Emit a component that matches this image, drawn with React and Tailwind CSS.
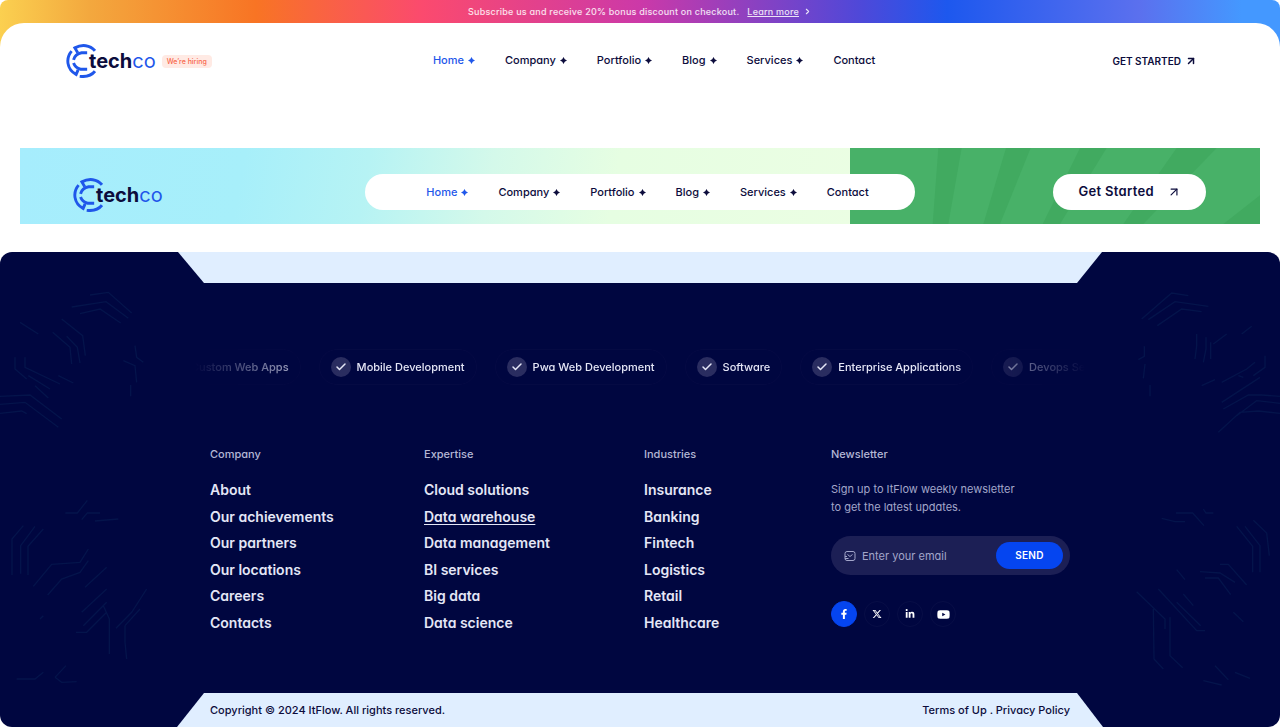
import React from 'react';
import { FaFacebookF, FaLinkedinIn, FaYoutube } from 'react-icons/fa';
import { FaXTwitter } from 'react-icons/fa6';
import { LuArrowUpRight, LuCheck, LuChevronRight } from 'react-icons/lu';

const navItems = [
  { text: 'Home', plus: true, active: true },
  { text: 'Company', plus: true },
  { text: 'Portfolio', plus: true },
  { text: 'Blog', plus: true },
  { text: 'Services', plus: true },
  { text: 'Contact' },
];

const services = [
  'Custom Web Apps',
  'Mobile Development',
  'Pwa Web Development',
  'Software',
  'Enterprise Applications',
  'Devops Services',
];

const columns = [
  {
    title: 'Company',
    links: ['About', 'Our achievements', 'Our partners', 'Our locations', 'Careers', 'Contacts'],
  },
  {
    title: 'Expertise',
    links: ['Cloud solutions', 'Data warehouse', 'Data management', 'BI services', 'Big data', 'Data science'],
    current: 'Data warehouse',
  },
  {
    title: 'Industries',
    links: ['Insurance', 'Banking', 'Fintech', 'Logistics', 'Retail', 'Healthcare'],
  },
];

const socials = [
  { name: 'Facebook', icon: <FaFacebookF />, active: true },
  { name: 'X', icon: <FaXTwitter /> },
  { name: 'LinkedIn', icon: <FaLinkedinIn /> },
  { name: 'YouTube', icon: <FaYoutube className="text-[13px]" /> },
];

export default function App() {
  return (
    <div className="bg-white font-['Inter',sans-serif] text-[#0c0c3c] [font-feature-settings:'cv11']">
      <TopHeader />
      <Banner />
      <Footer />
    </div>
  );
}

function TopHeader() {
  return (
    <header className="rounded-t-lg bg-[linear-gradient(90deg,#fbd050_0%,#f3a83e_7%,#f87424_20%,#fb4a6e_33%,#cc39a8_50%,#5048d8_67%,#1d58ee_74%,#5b70ee_89%,#4498ff_97%)]">
      <div className="flex h-[23px] items-center justify-center gap-2 text-[9px] font-medium tracking-wide text-white/85">
        <p>Subscribe us and receive 20% bonus discount on checkout.</p>
        <a href="#" className="flex items-center gap-1">
          <span className="underline">Learn more</span>
          <LuChevronRight strokeWidth={3} />
        </a>
      </div>
      <div className="flex h-[125px] items-start justify-between rounded-t-3xl bg-white pt-4 pr-[67px] pl-[66px]">
        <div className="flex h-11 items-center gap-[6px]">
          <Logo />
          <span className="rounded-sm bg-[#ffeae4] px-[5px] text-[7px] leading-[13px] font-medium text-[#f8694c]">
            We’re hiring
          </span>
        </div>
        <nav className="flex h-[42px] items-center">
          <NavLinks />
        </nav>
        <button className="flex h-11 items-center gap-1 rounded-full px-4 text-[10px] font-semibold">
          GET STARTED <LuArrowUpRight className="text-xs" strokeWidth={3} />
        </button>
      </div>
    </header>
  );
}

function Banner() {
  return (
    <section className="relative mx-5 bg-[linear-gradient(100deg,#a6edfd_0%,#a7effa_18%,#b6f3f4_28%,#d4f9ea_38%,#e6fee2_48%,#ebfee3_68%)]">
      {/* green part with the rays */}
      <svg
        className="absolute top-0 right-0 h-full w-[410px]"
        viewBox="-30 22 1230 230"
        preserveAspectRatio="none"
        aria-hidden="true"
      >
        <rect x="-30" y="22" width="1230" height="230" fill="#48b168" />
        <g fill="#41aa60">
          <path d="M235 22H305L265 252H218Z" />
          <path d="M438 22H512L420 252H370Z" />
          <path d="M660 22H740L600 252H548Z" />
          <path d="M950 22H1070L850 252H790Z" />
          <path d="M1200 165V252H1090Z" />
        </g>
      </svg>
      <div className="relative flex h-[76px] items-center pt-3 pr-[54px] pl-[53px]">
        <div className="flex-1 pt-[6px]">
          <Logo />
        </div>
        <nav className="flex h-9 w-[550px] items-center justify-center rounded-full bg-white pl-4">
          <NavLinks />
        </nav>
        <div className="flex flex-1 justify-end">
          <button className="flex h-9 items-center gap-[13px] rounded-full bg-white px-[25px] text-[13px] font-semibold tracking-wide">
            Get Started <LuArrowUpRight className="text-sm" />
          </button>
        </div>
      </div>
    </section>
  );
}

function NavLinks() {
  return (
    <ul className="flex items-center gap-[30px]">
      {navItems.map((item) => (
        <li key={item.text}>
          <a
            href="#"
            className={`flex items-center gap-1 text-[11px] font-medium ${item.active ? 'text-[#1f57ea]' : ''}`}
          >
            {item.text}
            {item.plus && <Spark />}
          </a>
        </li>
      ))}
    </ul>
  );
}

// four-pointed star next to the menu items
function Spark() {
  return (
    <svg className="size-[7px]" viewBox="0 0 14 14" fill="currentColor" aria-hidden="true">
      <path d="M7 0L9.5 4.5L14 7L9.5 9.5L7 14L4.5 9.5L0 7L4.5 4.5Z" />
    </svg>
  );
}

function Logo() {
  return (
    <a href="#" className="flex items-center text-xl leading-6">
      <svg className="h-[34px] w-[30px] shrink-0" viewBox="0 0 90 105" fill="none" aria-hidden="true">
        <g stroke="#1f57ea" strokeWidth="9">
          <path d="M88 21C73 3 48 0 26 12L35 27" />
          <path d="M16 22C-3 44 1 79 30 94L36 80" />
          <path d="M41 100C59 102 77 98 88 84" />
          <path d="M64 27H47C34 29 25 37 22 49" />
          <path d="M22 59C26 70 33 76 44 78H64" />
        </g>
      </svg>
      <span className="-ml-[7px] font-bold">tech</span>
      <span className="text-[#1f57ea]">co</span>
    </a>
  );
}

function Footer() {
  return (
    <footer className="relative mt-7 overflow-hidden rounded-xl bg-[#000640] text-[#e4e6f6]">
      <CircuitLeft />
      <CircuitRight />
      <div className="relative">
        <div className="mx-[178px] h-[31px] bg-[#e0eeff] [clip-path:polygon(0_0,100%_0,calc(100%-25px)_100%,26px_100%)]" />

        {/* services strip, faded at both ends */}
        <div className="mx-[195px] mt-[66px] overflow-hidden [mask-image:linear-gradient(90deg,transparent,#000_16%,#000_84%,transparent)]">
          <ul className="-ml-[42px] flex w-max gap-[18px]">
            {services.map((service) => (
              <li
                key={service}
                className="flex h-9 items-center gap-[6px] rounded-full border border-white/2 px-[11px] text-[11px] font-medium"
              >
                <span className="flex size-5 items-center justify-center rounded-full bg-[#2a2d60]">
                  <LuCheck className="text-xs" strokeWidth={3} />
                </span>
                {service}
              </li>
            ))}
          </ul>
        </div>

        <div className="mx-[210px] mt-[61px] grid grid-cols-[214fr_220fr_187fr_239fr]">
          {columns.map((column) => (
            <div key={column.title} className="min-w-0">
              <h2 className="text-[11px] leading-4 font-medium text-[#b4b7d5]">{column.title}</h2>
              <ul className="mt-[18px] flex h-[153px] flex-col justify-between text-sm leading-5 font-semibold">
                {column.links.map((link) => (
                  <li key={link}>
                    <a href="#" className={link === column.current ? 'underline underline-offset-2' : ''}>
                      {link}
                    </a>
                  </li>
                ))}
              </ul>
            </div>
          ))}
          <Newsletter />
        </div>

        <div className="mx-[177px] mt-[60px] flex h-[34px] items-center justify-between bg-[#e0eeff] px-[33px] text-[11px] font-medium text-[#0c0c3c] [clip-path:polygon(27px_0,calc(100%-26px)_0,100%_100%,0_100%)]">
          <p>Copyright © 2024 ItFlow. All rights reserved.</p>
          <p>
            <a href="#">Terms of Up</a> . <a href="#">Privacy Policy</a>
          </p>
        </div>
      </div>
    </footer>
  );
}

function Newsletter() {
  return (
    <div className="min-w-0">
      <h2 className="text-[11px] leading-4 font-medium text-[#b4b7d5]">Newsletter</h2>
      <p className="mt-[18px] text-[11px] leading-[18px] text-[#a3a6ca]">
        Sign up to ItFlow weekly newsletter
        <br />
        to get the latest updates.
      </p>
      <form className="mt-5 flex h-[39px] items-center rounded-full bg-[#1c1f55] pr-[7px] pl-[13px]">
        <label htmlFor="email" className="text-[#a3a6ca]" aria-label="Email">
          <svg className="size-3" viewBox="0 0 24 24" fill="none" stroke="currentColor" strokeWidth="2" aria-hidden="true">
            <rect x="2" y="3" width="20" height="18" rx="4" />
            <path d="M7 9L12 13L17 9M2 13H6M2 17H9" />
          </svg>
        </label>
        <input
          id="email"
          type="email"
          placeholder="Enter your email"
          className="ml-[6px] h-full min-w-0 flex-1 bg-transparent text-[11px] outline-none placeholder:text-[#a3a6ca]"
        />
        <button className="h-[27px] w-[67px] rounded-full bg-[#0545f0] text-[10px] font-semibold tracking-wide text-white">
          SEND
        </button>
      </form>
      <div className="mt-[26px] flex gap-[7px]">
        {socials.map((social) => (
          <a
            key={social.name}
            href="#"
            aria-label={social.name}
            className={`flex size-[26px] items-center justify-center rounded-full border text-[10px] text-white ${
              social.active ? 'border-[#0545f0] bg-[#0545f0]' : 'border-white/3'
            }`}
          >
            {social.icon}
          </a>
        ))}
      </div>
    </div>
  );
}

/* faint circuit lines on both sides of the footer */
function CircuitLeft() {
  return (
    <svg
      className="absolute bottom-0 left-0 h-[448px] w-[200px]"
      viewBox="0 0 600 1344"
      fill="none"
      stroke="#04144b"
      strokeWidth="4"
      aria-hidden="true"
    >
      <path d="M270 48L325 40L395 102M215 84L318 68L385 118M240 104L300 90L362 132" />
      <path d="M185 120L248 170L256 230M158 160L210 205L215 255M200 172L232 205L240 252M60 130L115 165" />
      <path d="M405 200L410 235L430 250M370 245L405 260L410 310M392 318V352" />
      <path d="M45 235V270L80 300M75 235V265L180 315M85 290L150 330M105 320L145 357M175 290L220 312" />
      <path d="M0 352L90 348L185 420M0 376L75 370L175 445M0 403L65 396L80 404" />
      <path d="M196 702H232L262 664M245 722L262 702H300M285 726L355 720" />
      <path d="M36 888V780L70 740M62 884V800L105 742M84 888V802L130 750" />
      <path d="M100 922L155 856L240 850L265 810M143 948L185 900L240 880L265 845" />
      <path d="M255 925L320 865M245 1000L320 930M250 1040L320 970M228 1060H260L320 1000M120 1020L130 1010" />
      <path d="M328 1125V1020L310 980M348 1048L395 1000L440 930M375 1040V1090L380 1140M375 1040L420 990" />
      <path d="M50 1200H105L130 1180M165 1195L198 1160M165 1195L185 1210L230 1208" />
    </svg>
  );
}

function CircuitRight() {
  return (
    <svg
      className="absolute right-0 bottom-0 h-[448px] w-[200px]"
      viewBox="0 0 600 1344"
      fill="none"
      stroke="#04144b"
      strokeWidth="4"
      aria-hidden="true"
    >
      <path d="M185 120L275 42L325 50M205 122L285 68L385 82M232 140L305 90L365 98" />
      <path d="M193 202V232L175 242M195 255L190 298M210 318V352" />
      <path d="M350 165V200L345 240M378 175V210L370 250M400 195L440 165M392 190V240M485 165L515 142M555 230V265L520 290" />
      <path d="M365 320L405 302M425 310L500 270L525 250M425 370L540 295M475 290L490 295" />
      <path d="M600 352L545 348H505L430 390M600 373L530 365L470 410M600 403L535 396L480 400L415 460" />
      <path d="M245 718L285 728H315M288 702H338L372 740M370 690L378 702H400" />
      <path d="M470 742L518 802V880M495 742L540 800V880M520 724L560 762L568 830" />
      <path d="M420 856H445L500 918M360 878L420 882L465 910M375 897H415L452 947M290 872L315 902" />
      <path d="M170 938L255 1020V1050M220 990L222 1140L250 1170M270 1015V1130L308 1166M235 930L350 1055H375M310 945L340 980M290 970L362 1040M460 1000L490 1028" />
      <path d="M370 1205L425 1218M405 1160L445 1202M465 1180L510 1198" />
    </svg>
  );
}
